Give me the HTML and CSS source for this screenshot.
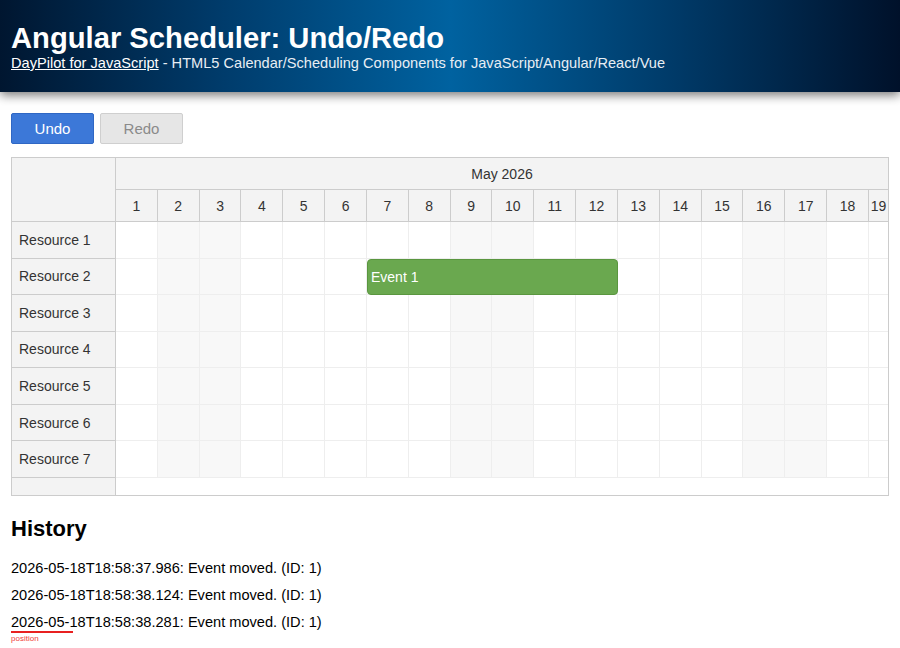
FILE: index.html
```html
<!DOCTYPE html>
<html>
<head>
<meta charset="utf-8">
<link rel="stylesheet" href="styles.css">
</head>
<body>
<header class="header">
  <h1 class="title">Angular Scheduler: Undo/Redo</h1>
  <div class="subtitle"><a href="#">DayPilot for JavaScript</a> - HTML5 Calendar/Scheduling Components for JavaScript/Angular/React/Vue</div>
</header>
<div class="toolbar">
  <button class="btn btn-primary">Undo</button>
  <button class="btn btn-disabled">Redo</button>
</div>
<div class="sched">
  <div class="left">
    <div class="corner"></div>
    <div class="rh">Resource 1</div>
    <div class="rh">Resource 2</div>
    <div class="rh">Resource 3</div>
    <div class="rh">Resource 4</div>
    <div class="rh">Resource 5</div>
    <div class="rh">Resource 6</div>
    <div class="rh">Resource 7</div>
    <div class="rh filler"></div>
  </div>
  <div class="right">
    <div class="month">May 2026</div>
    <div class="days" id="days"></div>
    <div class="grid" id="grid">
      <div class="event" style="left: 251px; width: 251px;">Event 1</div>
    </div>
  </div>
</div>
<h2 class="hist-title">History</h2>
<div class="history">
  <div class="entry">2026-05-18T18:58:37.986: Event moved. (ID: 1)</div>
  <div class="entry">2026-05-18T18:58:38.124: Event moved. (ID: 1)</div>
  <div class="entry"><span class="mark-wrap"><span class="mark">2026-05-</span>18T18:58:38.281: Event moved. (ID: 1)</span><span class="mark-line"></span><span class="mark-label">position</span></div>
</div>
<script>
(function(){
  var days = document.getElementById('days');
  var grid = document.getElementById('grid');
  var ev = grid.querySelector('.event');
  var weekend = {2:1,3:1,9:1,10:1,16:1,17:1};
  for (var d = 1; d <= 19; d++) {
    var el = document.createElement('div');
    el.className = 'day' + (d === 19 ? ' last' : '');
    el.textContent = d;
    days.appendChild(el);
  }
  for (var r = 0; r < 7; r++) {
    var row = document.createElement('div');
    row.className = 'row';
    for (var c = 1; c <= 19; c++) {
      var cell = document.createElement('div');
      cell.className = 'cell' + (weekend[c] ? ' we' : '') + (c === 19 ? ' last' : '');
      row.appendChild(cell);
    }
    grid.insertBefore(row, ev);
  }
  var f = document.createElement('div');
  f.className = 'row filler-row';
  grid.insertBefore(f, ev);
})();
</script>
</body>
</html>
```
FILE: styles.css
```css
html, body {
  margin: 0;
  padding: 0;
  background: #fff;
  font-family: "Liberation Sans", Arial, sans-serif;
  color: #000;
}
body {
  min-height: 648px;
}
.header {
  height: 92px;
  box-sizing: border-box;
  padding: 22px 11px 0;
  background: linear-gradient(to right, #001630 0%, #003c6c 25%, #0062a0 50%, #003a68 75%, #00112a 100%);
  box-shadow: 0 3px 10px rgba(0,0,0,0.55);
  color: #fff;
  position: relative;
}
.title {
  margin: 0;
  font-size: 29.2px;
  line-height: 32px;
  font-weight: bold;
}
.subtitle {
  font-size: 14.6px;
  line-height: 19px;
  color: #e8eef4;
}
.subtitle a {
  color: #fff;
  text-decoration: underline;
}
.toolbar {
  display: flex;
  gap: 6px;
  padding: 21px 11px 0;
}
.btn {
  width: 83px;
  height: 31px;
  font-family: "Liberation Sans", Arial, sans-serif;
  font-size: 15px;
  border-radius: 2px;
  padding: 0;
}
.btn-primary {
  background: #3c78d8;
  border: 1px solid #2f67c4;
  color: #fff;
}
.btn-disabled {
  background: #e6e6e6;
  border: 1px solid #cfcfcf;
  color: #8a8a8a;
}
.sched {
  margin: 13px 11px 0;
  width: 878px;
  box-sizing: border-box;
  border: 1px solid #cccccc;
  display: flex;
  font-size: 14px;
  color: #333;
}
.left {
  width: 104px;
  box-sizing: border-box;
  flex: none;
  background: #f3f3f3;
  border-right: 1px solid #cccccc;
}
.corner {
  height: 63px;
  border-bottom: 1px solid #cccccc;
}
.rh {
  height: 35.57px;
  border-bottom: 1px solid #cccccc;
  display: flex;
  align-items: center;
  padding-left: 7px;
}
.rh.filler {
  height: 17px;
  border-bottom: none;
}
.right {
  flex: 1;
  min-width: 0;
  overflow: hidden;
}
.month {
  height: 31px;
  background: #f3f3f3;
  border-bottom: 1px solid #cccccc;
  display: flex;
  align-items: center;
  justify-content: center;
}
.days {
  display: flex;
  height: 31px;
  background: #f3f3f3;
  border-bottom: 1px solid #cccccc;
}
.day {
  width: 41.83px;
  flex: none;
  box-sizing: border-box;
  border-right: 1px solid #cccccc;
  display: flex;
  align-items: center;
  justify-content: center;
}
.day.last, .cell.last {
  flex: 1 1 auto;
  width: auto;
  min-width: 0;
  border-right: none;
}
.grid {
  position: relative;
}
.row {
  display: flex;
  height: 36.57px;
  box-sizing: border-box;
  border-bottom: 1px solid #eeeeee;
}
.cell {
  width: 41.83px;
  flex: none;
  box-sizing: border-box;
  border-right: 1px solid #eeeeee;
  background: #fff;
}
.cell.we {
  background: #f8f8f8;
}
.filler-row {
  height: 17px;
  border-bottom: none;
}
.event {
  position: absolute;
  top: 37px;
  height: 36px;
  box-sizing: border-box;
  background: #6aa84f;
  border: 1px solid #5a963f;
  border-radius: 4px;
  color: #fff;
  font-size: 14px;
  display: flex;
  align-items: center;
  padding-left: 3px;
}
.hist-title {
  margin: 19px 11px 0;
  font-size: 22px;
  line-height: 28px;
  font-weight: bold;
}
.history {
  margin: 12px 11px 0;
  padding-bottom: 20px;
  font-size: 14.6px;
  line-height: 27px;
}
.entry {
  position: relative;
}
.mark-line {
  position: absolute;
  left: 0;
  top: 22px;
  width: 62px;
  height: 2px;
  background: #e82020;
}
.mark-label {
  position: absolute;
  left: 0;
  top: 25px;
  font-size: 8px;
  line-height: 9px;
  color: #f03a3a;
  white-space: nowrap;
}
```
